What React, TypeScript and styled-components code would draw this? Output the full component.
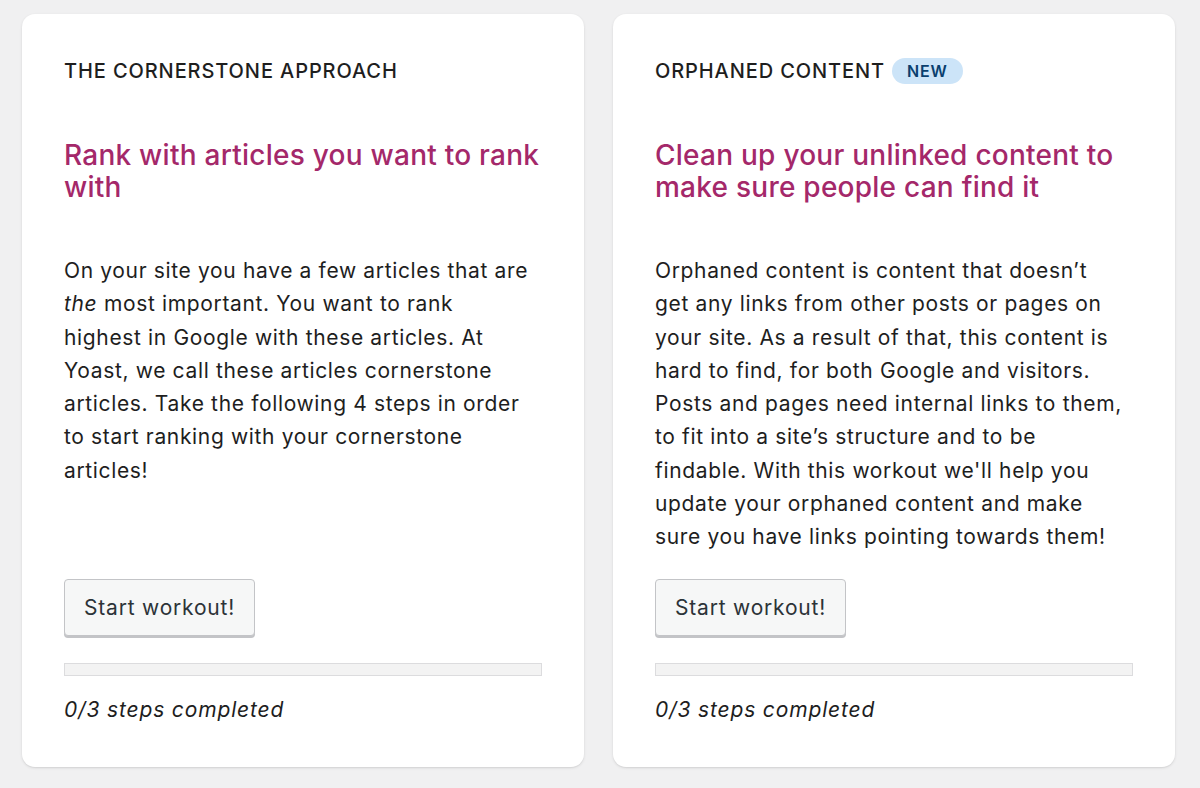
import React from "react";
import styled, { createGlobalStyle } from "styled-components";

const Global = createGlobalStyle`
  html, body { margin: 0; padding: 0; background: #f0f0f1; }
  body { font-family: Inter, "Noto Sans", "Liberation Sans", sans-serif; -webkit-font-smoothing: antialiased; }
  * { box-sizing: border-box; }
`;

const Page = styled.div`
  display: grid;
  grid-template-columns: 562px 562px;
  column-gap: 29px;
  padding: 14px 25px 21px 22px;
  width: 1200px;
  min-height: 788px;
`;

const Card = styled.section`
  display: flex;
  flex-direction: column;
  background: #fff;
  border-radius: 13px;
  box-shadow: 0 1px 3px rgba(0, 0, 0, 0.1), 0 1px 1px rgba(0, 0, 0, 0.04);
  padding: 45px 42px 42px;
  height: 753px;
`;

const Kicker = styled.h3`
  display: flex;
  align-items: center;
  gap: 7px;
  margin: 0;
  height: 24px;
  font-size: 20px;
  line-height: 24px;
  font-weight: 500;
  letter-spacing: 0.9px;
  color: #1e1e1e;
  text-transform: uppercase;
  white-space: nowrap;
`;

const Badge = styled.span`
  display: inline-flex;
  align-items: center;
  height: 26px;
  padding: 0 15px;
  border-radius: 13px;
  background: #cce4f8;
  color: #0a3f6e;
  font-size: 16px;
  font-weight: 600;
  letter-spacing: 0.8px;
`;

const Heading = styled.h2`
  margin: 56px 0 0;
  font-size: 28px;
  line-height: 32px;
  font-weight: 500;
  color: #a4286a;
  letter-spacing: 0.25px;
  white-space: nowrap;
`;

const Body = styled.p`
  margin: 51px 0 0;
  font-size: 21px;
  line-height: 33.3px;
  letter-spacing: 0.65px;
  color: #1e1e1e;
  white-space: nowrap;
  em { font-style: italic; }
`;

const Button = styled.button`
  align-self: flex-start;
  margin-top: auto;
  height: 57px;
  padding: 0 19px;
  font-family: inherit;
  font-size: 21px;
  letter-spacing: 0.8px;
  color: #2c3338;
  background: #f6f7f7;
  border: 1px solid #c3c4c7;
  border-radius: 4px;
  box-shadow: 0 2px 0 #c3c4c7;
  cursor: pointer;
`;

const Progress = styled.div`
  margin-top: 27px;
  height: 13px;
  width: 478px;
  background: #f3f3f3;
  border: 1px solid #dcdcde;
`;

const Steps = styled.p`
  margin: 19px 0 0;
  font-size: 21px;
  line-height: 30px;
  letter-spacing: 0.85px;
  font-style: italic;
  color: #1e1e1e;
`;

type Workout = {
  kicker: string;
  isNew?: boolean;
  heading: React.ReactNode;
  body: React.ReactNode;
};

const workouts: Workout[] = [
  {
    kicker: "The cornerstone approach",
    heading: (
      <>
        Rank with articles you want to rank
        <br />
        with
      </>
    ),
    body: (
      <>
        On your site you have a few articles that are
        <br />
        <em>the</em> most important. You want to rank
        <br />
        highest in Google with these articles. At
        <br />
        Yoast, we call these articles cornerstone
        <br />
        articles. Take the following 4 steps in order
        <br />
        to start ranking with your cornerstone
        <br />
        articles!
      </>
    ),
  },
  {
    kicker: "Orphaned content",
    isNew: true,
    heading: (
      <>
        Clean up your unlinked content to
        <br />
        make sure people can find it
      </>
    ),
    body: (
      <>
        Orphaned content is content that doesn’t
        <br />
        get any links from other posts or pages on
        <br />
        your site. As a result of that, this content is
        <br />
        hard to find, for both Google and visitors.
        <br />
        Posts and pages need internal links to them,
        <br />
        to fit into a site’s structure and to be
        <br />
        findable. With this workout we'll help you
        <br />
        update your orphaned content and make
        <br />
        sure you have links pointing towards them!
      </>
    ),
  },
];

export default function App() {
  return (
    <>
      <Global />
      <Page>
        {workouts.map((w) => (
          <Card key={w.kicker}>
            <Kicker>
              {w.kicker}
              {w.isNew && <Badge>New</Badge>}
            </Kicker>
            <Heading>{w.heading}</Heading>
            <Body>{w.body}</Body>
            <Button>Start workout!</Button>
            <Progress />
            <Steps>0/3 steps completed</Steps>
          </Card>
        ))}
      </Page>
    </>
  );
}
